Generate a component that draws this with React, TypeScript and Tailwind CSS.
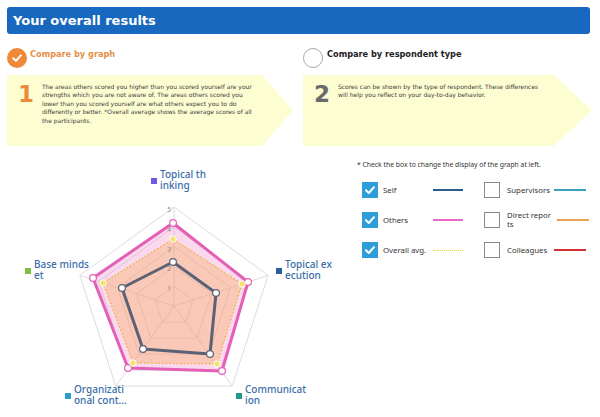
import React from 'react'

const CX = 174
const CY = 306
const UNIT = 19.8
const ANGLES = [-90, -18, 54, 126, 198]

const ring = (r: number) =>
  ANGLES.map(a => {
    const rad = (a * Math.PI) / 180
    return `${CX + r * Math.cos(rad)},${CY + r * Math.sin(rad)}`
  }).join(' ')

const spoke = (i: number, r: number) => {
  const rad = (ANGLES[i] * Math.PI) / 180
  return [CX + r * Math.cos(rad), CY + r * Math.sin(rad)]
}

const OTHERS = [[173, 223], [248, 282], [222, 371], [128, 368], [93, 278]]
const AVG = [[173, 239], [242, 284], [217, 364], [133, 363], [103, 283]]
const SELF = [[173, 262], [216, 293], [210, 354], [143, 349], [122, 288]]

const toPts = (p: number[][]) => p.map(([x, y]) => `${x},${y}`).join(' ')

const AXIS_LABELS = [
  { lines: ['Topical th', 'inking'], color: 'bg-[#7357e0]', pos: 'left-[151px] top-[19px]' },
  { lines: ['Topical ex', 'ecution'], color: 'bg-[#2b5e9e]', pos: 'left-[276px] top-[109px]' },
  { lines: ['Communicat', 'ion'], color: 'bg-[#1f9a8c]', pos: 'left-[236px] top-[234px]' },
  { lines: ['Organizati', 'onal cont...'], color: 'bg-[#2a9fcf]', pos: 'left-[65px] top-[234px]' },
  { lines: ['Base minds', 'et'], color: 'bg-[#7cc043]', pos: 'left-[25px] top-[109px]' },
]

function RadarChart() {
  return (
    <div className="relative w-[300px] h-[267px] shrink-0">
      <svg className="absolute inset-0" width="300" height="267" viewBox="0 150 300 267">
        {[1, 2, 3, 4, 5].map(k => (
          <polygon key={k} points={ring(k * UNIT)} fill="none" stroke="#dcdcdc" strokeWidth="1" />
        ))}
        {ANGLES.map((_, i) => {
          const [x, y] = spoke(i, 5 * UNIT)
          return <line key={i} x1={CX} y1={CY} x2={x} y2={y} stroke="#dcdcdc" strokeWidth="1" />
        })}
        <polygon points={toPts(OTHERS)} fill="rgba(238,130,200,0.3)" stroke="#e460b6" strokeWidth="3" strokeLinejoin="round" />
        <polygon points={toPts(AVG)} fill="rgba(250,175,100,0.4)" stroke="#efb02c" strokeWidth="1.2" strokeDasharray="1.6 2" />
        <polygon points={toPts(SELF)} fill="none" stroke="#5b6276" strokeWidth="3" strokeLinejoin="round" />
        {[5, 4, 3, 2, 1].map(k => (
          <text key={k} x={CX - 3} y={CY - k * UNIT + 5} fontSize="6.5" fill="#8a8a8a" textAnchor="end" fontFamily="Noto Sans, sans-serif">
            {k}
          </text>
        ))}
        {OTHERS.map(([x, y], i) => (
          <circle key={'o' + i} cx={x} cy={y} r="3.4" fill="#fff" stroke="#e460b6" strokeWidth="1.2" />
        ))}
        {AVG.map(([x, y], i) => (
          <circle key={'a' + i} cx={x} cy={y} r="3.2" fill="#f6e16a" stroke="#fff" strokeWidth="1" />
        ))}
        {SELF.map(([x, y], i) => (
          <circle key={'s' + i} cx={x} cy={y} r="3.4" fill="#fff" stroke="#5b6276" strokeWidth="1.2" />
        ))}
      </svg>
      {AXIS_LABELS.map(l => (
        <div key={l.lines[0]} className={`absolute ${l.pos} flex items-start gap-[3px] whitespace-nowrap`}>
          <span className={`mt-[9px] w-[6px] h-[6px] ${l.color}`} />
          <div className="font-['Noto_Sans',sans-serif] font-medium text-[10px] leading-[11px] text-[#3a6ea8]">
            {l.lines[0]}
            <br />
            {l.lines[1]}
          </div>
        </div>
      ))}
    </div>
  )
}

function Checkbox({ checked }: { checked: boolean }) {
  if (!checked) return <span className="w-[16px] h-[16px] shrink-0 border border-[#8a8a8a] bg-white" />
  return (
    <span className="w-[16px] h-[16px] shrink-0 bg-[#2d9ed8] flex items-center justify-center">
      <svg width="12" height="12" viewBox="0 0 12 12">
        <path d="M2 6.2 L4.8 9 L10 3.2" fill="none" stroke="#fff" strokeWidth="2" strokeLinecap="round" strokeLinejoin="round" />
      </svg>
    </span>
  )
}

const LEGEND = [
  [
    { label: 'Self', checked: true, line: 'h-[2.5px] bg-[#2b5d8e]' },
    { label: 'Supervisors', checked: false, line: 'h-[2px] bg-[#3aa0bf]' },
  ],
  [
    { label: 'Others', checked: true, line: 'h-[2.5px] bg-[#e968c4]' },
    { label: 'Direct repor ts', checked: false, line: 'h-[2px] bg-[#e9a353]' },
  ],
  [
    { label: 'Overall avg.', checked: true, line: 'border-t-[1.5px] border-dotted border-[#e8cc3c]' },
    { label: 'Colleagues', checked: false, line: 'h-[2px] bg-[#d23030]' },
  ],
]

function Legend() {
  return (
    <div className="pt-[10px] pl-[57px] font-['Noto_Sans',sans-serif] text-[#333]">
      <p className="text-[6.8px] leading-[10px] whitespace-nowrap">* Check the box to change the display of the graph at left.</p>
      <div className="mt-[12px] ml-[5px] flex flex-col gap-[14px]">
        {LEGEND.map((row, ri) => (
          <div key={ri} className="flex h-[16px]">
            {row.map((item, ci) => (
              <div key={item.label} className={`flex items-center ${ci === 0 ? 'w-[122px]' : ''}`}>
                <Checkbox checked={item.checked} />
                <span
                  className={`text-[7.8px] leading-[9px] ${ci === 0 ? 'ml-[5px] w-[50px]' : 'ml-[7px] w-[47px]'} ${
                    item.label === 'Direct repor ts' ? 'whitespace-normal w-[44px] mr-[3px]' : 'whitespace-nowrap'
                  }`}
                >
                  {item.label === 'Direct repor ts' ? (
                    <>
                      Direct repor
                      <br />
                      ts
                    </>
                  ) : (
                    item.label
                  )}
                </span>
                <span className={`${ci === 0 ? 'w-[30px]' : 'w-[32px]'} ${item.line}`} />
              </div>
            ))}
          </div>
        ))}
      </div>
    </div>
  )
}

export default function App() {
  return (
    <div className="w-[600px] h-[417px] bg-white overflow-hidden font-['DejaVu_Sans',sans-serif]">
      {/* Title bar */}
      <div className="ml-[7px] mt-[7px] w-[583px] h-[27px] rounded-[3px] bg-[#1768be] flex items-center pl-[6px]">
        <h1 className="text-white font-bold text-[13px] leading-none">Your overall results</h1>
      </div>

      {/* Steps */}
      <div className="mt-[14px] ml-[7px] flex gap-[10px]">
        <div className="w-[286px]">
          <div className="flex items-start gap-[3px] h-[20px]">
            <span className="w-[20px] h-[20px] rounded-full bg-[#ef8838] flex items-center justify-center">
              <svg width="12" height="12" viewBox="0 0 12 12">
                <path d="M2.2 6.3 L4.9 8.9 L9.9 3.4" fill="none" stroke="#fff" strokeWidth="2" strokeLinecap="round" strokeLinejoin="round" />
              </svg>
            </span>
            <span className="pt-[1px] text-[8.2px] leading-[10px] font-bold text-[#e3914b]">Compare by graph</span>
          </div>
          <div className="mt-[7px] h-[71px] bg-[#fdfdd2] [clip-path:polygon(0_0,calc(100%-31px)_0,100%_50%,calc(100%-31px)_100%,0_100%)] flex pt-[7.5px] pl-[11px]">
            <span className="w-[24px] shrink-0 text-[23px] leading-[23px] font-bold text-[#ee8a3c]">1</span>
            <p className="text-[6px] leading-[8.6px] text-[#3a3a3a] whitespace-nowrap">
              The areas others scored you higher than you scored yourself are your
              <br />
              strengths which you are not aware of. The areas others scored you
              <br />
              lower than you scored yourself are what others expect you to do
              <br />
              differently or better. *Overall average shows the average scores of all
              <br />
              the participants.
            </p>
          </div>
        </div>
        <div className="w-[289px]">
          <div className="flex items-start gap-[4px] h-[20px]">
            <span className="w-[20px] h-[20px] rounded-full border border-[#a9a9a9] bg-white" />
            <span className="pt-[1px] text-[8.2px] leading-[10px] font-bold text-[#222]">Compare by respondent type</span>
          </div>
          <div className="mt-[7px] h-[71px] bg-[#fdfdd2] [clip-path:polygon(0_0,calc(100%-38px)_0,100%_50%,calc(100%-38px)_100%,0_100%)] flex pt-[7.5px] pl-[11px]">
            <span className="w-[24px] shrink-0 text-[23px] leading-[23px] font-bold text-[#6a6a6a]">2</span>
            <p className="text-[6px] leading-[8px] text-[#3a3a3a] whitespace-nowrap">
              Scores can be shown by the type of respondent. These differences
              <br />
              will help you reflect on your day-to-day behavior.
            </p>
          </div>
        </div>
      </div>

      {/* Chart + legend */}
      <div className="mt-[4px] flex">
        <RadarChart />
        <Legend />
      </div>
    </div>
  )
}
